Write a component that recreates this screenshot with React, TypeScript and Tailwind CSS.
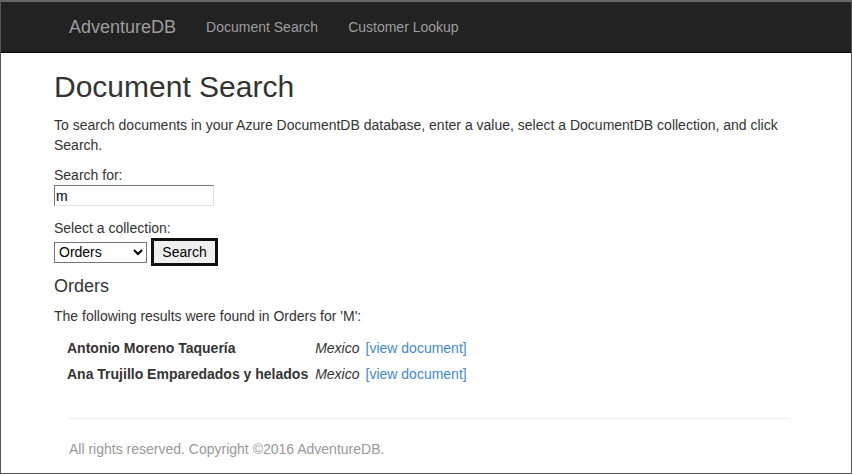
import React from 'react';

const results = [
  { name: 'Antonio Moreno Taquería', country: 'Mexico' },
  { name: 'Ana Trujillo Emparedados y helados', country: 'Mexico' },
];

const App: React.FC = () => {
  return (
    <div
      className="w-[852px] h-[474px] overflow-hidden bg-white border border-[#555] border-t-2 border-t-[#666] text-[#333] text-[14px] leading-[20px]"
      style={{ fontFamily: '"Liberation Sans", Arial, sans-serif' }}
    >
      {/* Navbar */}
      <nav className="h-[51px] bg-[#222] border-b border-[#080808] flex items-center pl-[53px]">
        <a className="px-[15px] text-[18px] leading-[20px] text-[#9d9d9d]">AdventureDB</a>
        <a className="px-[15px] text-[14px] text-[#9d9d9d]">Document Search</a>
        <a className="px-[15px] text-[14px] text-[#9d9d9d]">Customer Lookup</a>
      </nav>

      {/* Main content */}
      <main className="pl-[53px] w-[803px]">
        <h1 className="mt-[17px] text-[30px] leading-[33px] font-normal">Document Search</h1>
        <p className="mt-[12px]">
          To search documents in your Azure DocumentDB database, enter a value, select a DocumentDB collection, and click
          Search.
        </p>

        <div className="mt-[10px]">Search for:</div>
        <input
          defaultValue="m"
          className="block w-[160px] h-[21px] px-[1px] text-[14px] leading-[17px] text-black bg-white border border-t-[#767676] border-l-[#767676] border-r-[#e3e3e3] border-b-[#e3e3e3] outline-none"
        />

        <div className="mt-[12px]">Select a collection:</div>
        <div className="flex items-center gap-[4px] h-[28px]">
          <select
            defaultValue="Orders"
            className="w-[93px] h-[21px] text-[14px] text-black bg-white border border-[#767676]"
          >
            <option>Orders</option>
            <option>Customers</option>
          </select>
          <button className="w-[67px] h-[28px] text-[14px] text-black bg-[#efefef] border-[3px] border-[#111]">
            Search
          </button>
        </div>

        <h3 className="mt-[10px] text-[18px] leading-[20px] font-normal">Orders</h3>
        <p className="mt-[10px]">The following results were found in Orders for 'M':</p>

        <table className="mt-[9px] ml-[13px] border-collapse">
          <tbody>
            {results.map((r) => (
              <tr key={r.name} className="h-[26px]">
                <td className="pr-[7px] font-bold whitespace-nowrap">{r.name}</td>
                <td className="pr-[6px] italic">{r.country}</td>
                <td>
                  <a className="text-[#428bca]">[view document]</a>
                </td>
              </tr>
            ))}
          </tbody>
        </table>
      </main>

      {/* Footer */}
      <footer className="pl-[68px] w-[788px]">
        <hr className="mt-[31px] border-0 border-t border-[#eee]" />
        <p className="mt-[20px] text-[#999]">All rights reserved. Copyright ©2016 AdventureDB.</p>
      </footer>
    </div>
  );
};

export default App;
